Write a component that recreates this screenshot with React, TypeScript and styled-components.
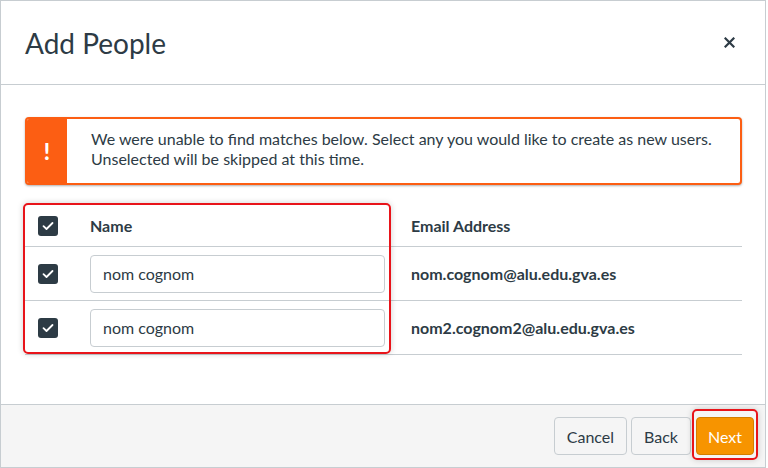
import React from "react";
import styled, { createGlobalStyle } from "styled-components";

const Global = createGlobalStyle`
  html, body { margin: 0; padding: 0; background: #ffffff; }
  body { font-family: Lato, "Noto Sans", sans-serif; color: #2d3b45; }
  * { box-sizing: border-box; }
`;

const Dialog = styled.div`
  position: relative;
  width: 766px;
  height: 468px;
  border: 1px solid #c7cdd1;
  display: flex;
  flex-direction: column;
  background: #fff;
`;

const Header = styled.div`
  height: 84px;
  flex: none;
  border-bottom: 1px solid #c7cdd1;
  display: flex;
  align-items: center;
  justify-content: space-between;
  padding: 0 29px 0 24px;
`;

const Title = styled.h2`
  margin: 0;
  font-size: 28px;
  font-weight: 400;
  color: #2d3b45;
  letter-spacing: 0;
`;

const Close = styled.button`
  border: 0;
  background: none;
  padding: 0;
  width: 14px;
  height: 14px;
  display: flex;
  align-items: center;
  justify-content: center;
  color: #2d3b45;
  cursor: pointer;
`;

const Body = styled.div`
  flex: 1;
  padding: 32px 23px 0 24px;
  position: relative;
`;

const Alert = styled.div`
  display: flex;
  height: 68px;
  border: 2px solid #fc5e13;
  border-radius: 4px;
  background: #fff;
  box-shadow: 0 1px 3px rgba(0, 0, 0, 0.12), 0 1px 2px rgba(0, 0, 0, 0.2);
  overflow: hidden;
`;

const AlertIcon = styled.div`
  width: 40px;
  flex: none;
  background: #fc5e13;
  color: #fff;
  display: flex;
  align-items: center;
  justify-content: center;
  font-size: 22px;
  font-weight: 900;
`;

const AlertText = styled.div`
  padding: 10px 22px 0 24px;
  font-size: 16px;
  line-height: 20px;
  color: #2d3b45;
`;

const Table = styled.div`
  margin-top: 20px;
  display: flex;
  flex-direction: column;
`;

const Row = styled.div<{ $head?: boolean }>`
  display: grid;
  grid-template-columns: 65px 301px 1fr;
  align-items: center;
  height: ${(p) => (p.$head ? 42 : 54)}px;
  border-bottom: 1px solid #c7cdd1;
`;

const CheckCell = styled.div`
  padding-left: 13px;
  display: flex;
  align-items: center;
`;

const Check = styled.span`
  width: 20px;
  height: 20px;
  border-radius: 3px;
  background: #2d3b45;
  display: flex;
  align-items: center;
  justify-content: center;
`;

const HeadText = styled.div`
  font-size: 16px;
  font-weight: 700;
  color: #2d3b45;
`;

const NameInput = styled.div`
  height: 38px;
  border: 1px solid #c7cdd1;
  border-radius: 4px;
  display: flex;
  align-items: center;
  padding: 0 12px;
  font-size: 16px;
  color: #2d3b45;
  margin-right: 6px;
`;

const Email = styled.div`
  font-size: 16px;
  font-weight: 700;
  color: #2d3b45;
  padding-left: 20px;
`;

const HeadEmail = styled(HeadText)`
  padding-left: 20px;
`;

const Highlight = styled.div<{ $x: number; $y: number; $w: number; $h: number }>`
  position: absolute;
  left: ${(p) => p.$x}px;
  top: ${(p) => p.$y}px;
  width: ${(p) => p.$w}px;
  height: ${(p) => p.$h}px;
  border: 2px solid #e8141a;
  border-radius: 5px;
  box-shadow: 0 0 6px rgba(0, 0, 0, 0.18);
  pointer-events: none;
`;

const Footer = styled.div`
  height: 63px;
  flex: none;
  border-top: 1px solid #c7cdd1;
  background: #f5f5f5;
  display: flex;
  align-items: center;
  justify-content: flex-end;
  gap: 4px;
  padding: 0 11px 0 0;
`;

const Button = styled.button<{ $primary?: boolean }>`
  height: 38px;
  padding: 0 ${(p) => (p.$primary ? "11px" : "12px")};
  border-radius: 4px;
  font-family: Lato, "Noto Sans", sans-serif;
  font-size: 16px;
  cursor: pointer;
  border: 1px solid ${(p) => (p.$primary ? "#d37d00" : "#c7cdd1")};
  background: ${(p) => (p.$primary ? "#f79400" : "#f5f5f5")};
  color: ${(p) => (p.$primary ? "#ffffff" : "#2d3b45")};
  margin-left: ${(p) => (p.$primary ? "1px" : "0")};
`;

const CheckMark = () => (
  <svg width="12" height="10" viewBox="0 0 12 10">
    <path d="M1.5 5.2 L4.5 8 L10.5 2" fill="none" stroke="#fff" strokeWidth="1.8" strokeLinecap="round" strokeLinejoin="round" />
  </svg>
);

const rows = [
  { name: "nom cognom", email: "nom.cognom@alu.edu.gva.es" },
  { name: "nom cognom", email: "nom2.cognom2@alu.edu.gva.es" },
];

export default function App() {
  return (
    <>
      <Global />
      <Dialog>
        <Header>
          <Title>Add People</Title>
          <Close aria-label="Close">
            <svg width="11" height="11" viewBox="0 0 11 11">
              <path d="M1.5 1.5 L9.5 9.5 M9.5 1.5 L1.5 9.5" stroke="#2d3b45" strokeWidth="2.2" strokeLinecap="square" />
            </svg>
          </Close>
        </Header>
        <Body>
          <Alert>
            <AlertIcon>!</AlertIcon>
            <AlertText>
              We were unable to find matches below. Select any you would like to create as new users.
              Unselected will be skipped at this time.
            </AlertText>
          </Alert>
          <Table>
            <Row $head>
              <CheckCell>
                <Check>
                  <CheckMark />
                </Check>
              </CheckCell>
              <HeadText>Name</HeadText>
              <HeadEmail>Email Address</HeadEmail>
            </Row>
            {rows.map((r, i) => (
              <Row key={i}>
                <CheckCell>
                  <Check>
                    <CheckMark />
                  </Check>
                </CheckCell>
                <NameInput>{r.name}</NameInput>
                <Email>{r.email}</Email>
              </Row>
            ))}
          </Table>
        </Body>
        <Footer>
          <Button>Cancel</Button>
          <Button>Back</Button>
          <Button $primary>Next</Button>
        </Footer>
        <Highlight $x={22} $y={202} $w={368} $h={151} />
        <Highlight $x={691} $y={408} $w={66} $h={51} />
      </Dialog>
    </>
  );
}
